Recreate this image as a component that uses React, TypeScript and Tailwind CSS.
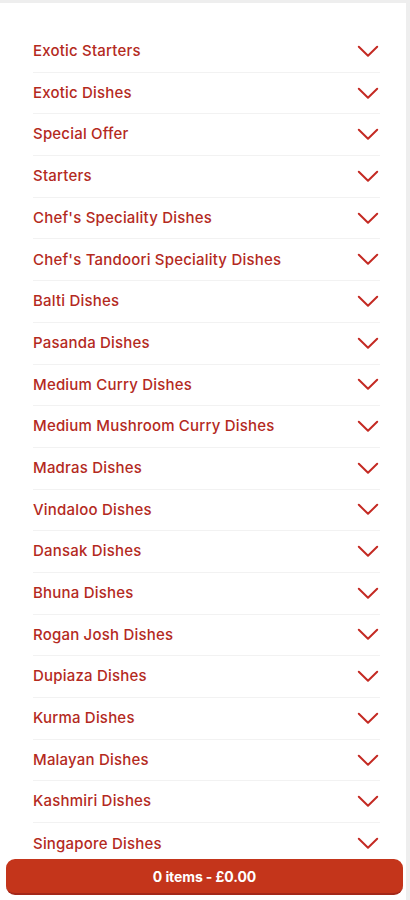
const categories = [
  'Exotic Starters',
  'Exotic Dishes',
  'Special Offer',
  'Starters',
  "Chef's Speciality Dishes",
  "Chef's Tandoori Speciality Dishes",
  'Balti Dishes',
  'Pasanda Dishes',
  'Medium Curry Dishes',
  'Medium Mushroom Curry Dishes',
  'Madras Dishes',
  'Vindaloo Dishes',
  'Dansak Dishes',
  'Bhuna Dishes',
  'Rogan Josh Dishes',
  'Dupiaza Dishes',
  'Kurma Dishes',
  'Malayan Dishes',
  'Kashmiri Dishes',
  'Singapore Dishes',
];

function Chevron() {
  return (
    <svg width="22" height="13" viewBox="0 0 22 13" fill="none" className="mr-[1px]">
      <polyline points="1.8,1.8 11,10.8 20.2,1.8" stroke="#c42a23" strokeWidth="2" strokeLinecap="round" strokeLinejoin="round" />
    </svg>
  );
}

export default function App() {
  return (
    <div className="h-[900px] w-[410px] overflow-hidden bg-[#eeeeee] pt-[3px] pr-[4px] font-['Inter',sans-serif]">
      <div className="relative h-full bg-white">
        <ul className="pl-[33px] pr-[26px] pt-[28px]">
          {categories.map((name, i) => (
            <li
              key={name}
              className={`flex h-[41.7px] items-center justify-between ${i < categories.length - 1 ? 'border-b border-[#f2f2f2]' : ''}`}
            >
              <span className="text-[15px] font-medium tracking-[0.2px] text-[#b42a1e]">{name}</span>
              <Chevron />
            </li>
          ))}
        </ul>

        {/* basket bar */}
        <div className="absolute bottom-[5px] left-[6px] right-[3px] flex h-[36px] items-center justify-center rounded-[9px] border-b-2 border-[#a3281a] bg-[#c4351b]">
          <span className="text-[14px] font-bold tracking-[-0.1px] text-white">0 items - £0.00</span>
        </div>
      </div>
    </div>
  );
}
